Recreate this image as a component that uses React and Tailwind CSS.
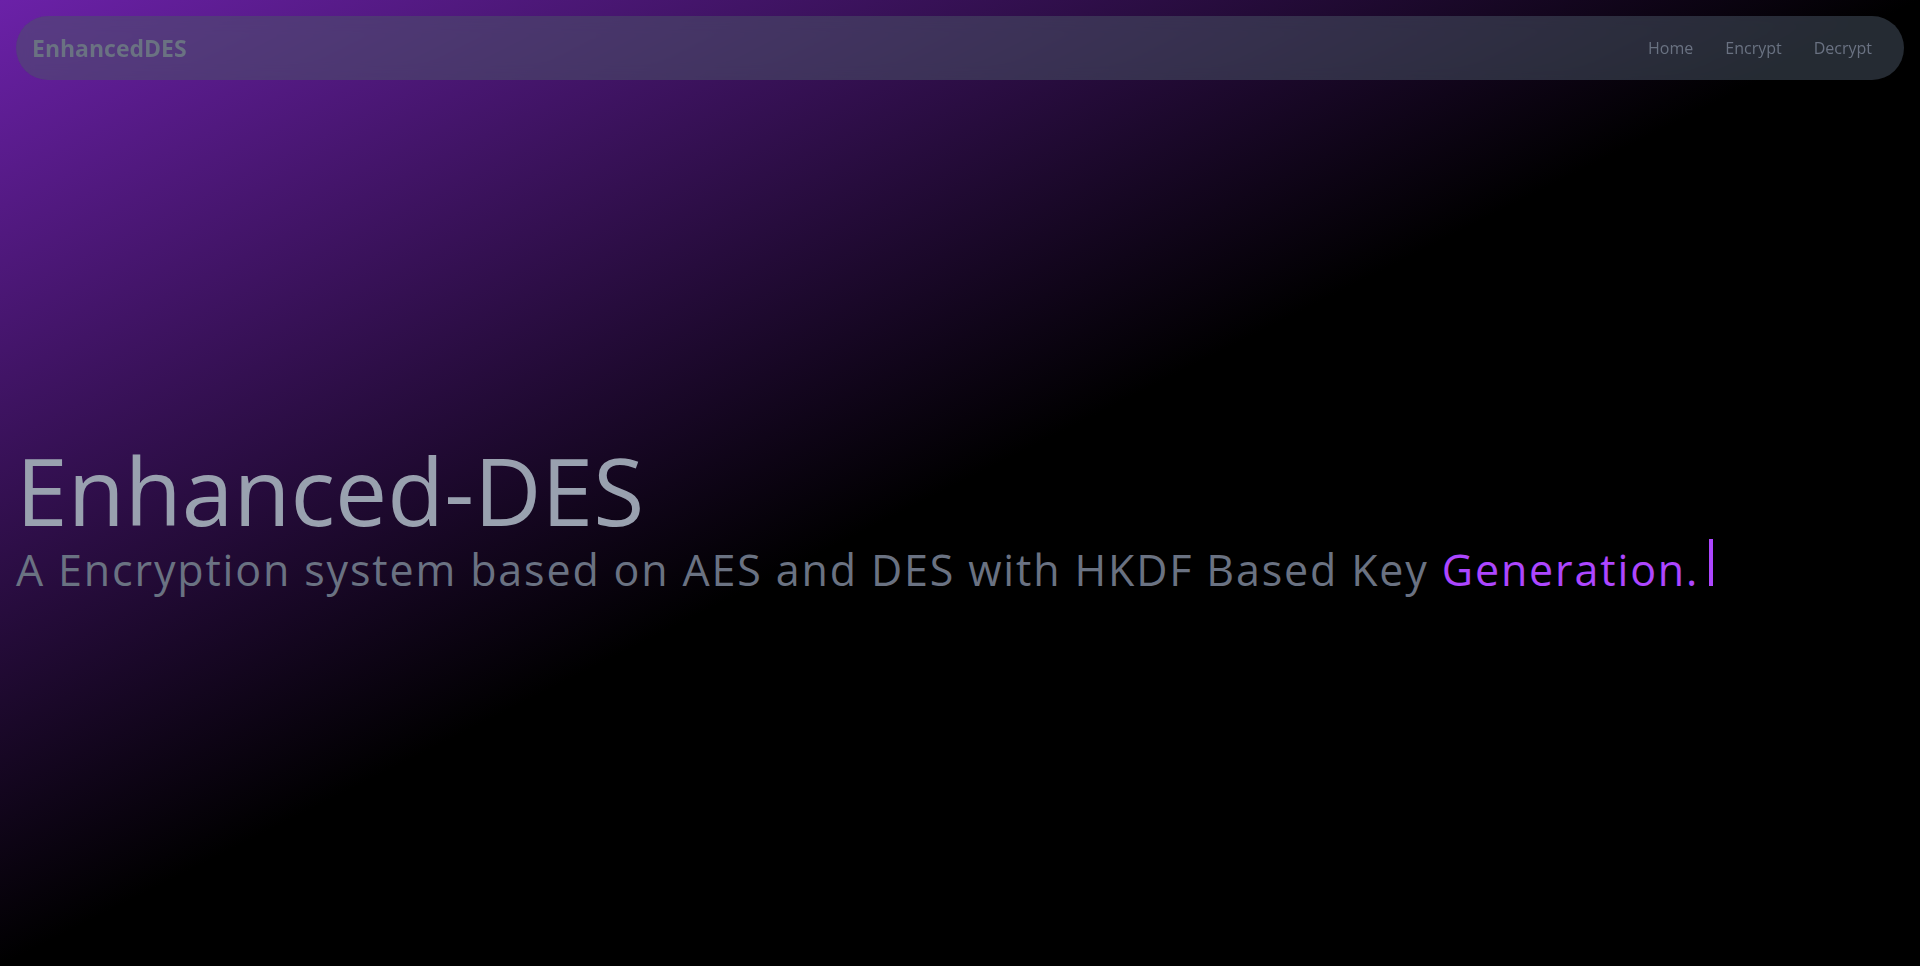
import React from 'react';

export default function App() {
  const links = ['Home', 'Encrypt', 'Decrypt'];

  return (
    <div className="min-h-screen bg-[linear-gradient(to_bottom_right,#6b21a8,#000000_50%,#000000)] font-['Open_Sans',sans-serif]">
      {/* Navbar */}
      <nav className="fixed top-4 left-4 right-4 h-16 rounded-full bg-gray-600/50 backdrop-blur-sm flex items-center justify-between px-4">
        <span className="text-[23px] font-bold text-gray-500">EnhancedDES</span>
        <div className="flex items-center">
          {links.map((link) => (
            <a key={link} href="#" className="px-4 text-base text-gray-500">
              {link}
            </a>
          ))}
        </div>
      </nav>

      {/* Hero */}
      <main className="h-screen flex flex-col justify-center px-4 pt-[68px]">
        <h1 className="text-[93px] leading-none text-gray-400">Enhanced-DES</h1>
        <p className="text-[43px] leading-none tracking-[0.043em] text-gray-500 mt-[2px]">
          A Encryption system based on AES and DES with HKDF Based Key{' '}
          <span className="text-purple-500">Generation.</span>
          <span className="inline-block w-1 h-[47px] ml-[10px] bg-purple-500" />
        </p>
      </main>
    </div>
  );
}
